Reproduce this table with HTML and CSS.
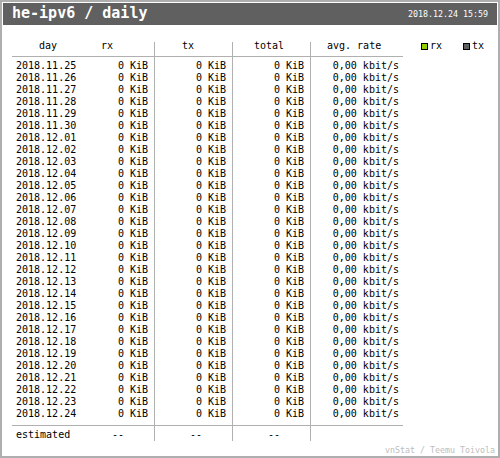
FILE: index.html
```
<!DOCTYPE html>
<html>
<head>
<meta charset="utf-8">
<link rel="stylesheet" href="styles.css">
</head>
<body>
<div class="frame">
  <div class="titlebar">
    <div class="title">he-ipv6 / daily</div>
    <div class="date">2018.12.24 15:59</div>
  </div>
  <div class="main">
    <div class="table">
      <div class="col day">
        <div class="hd">day</div>
        <div class="bd">
          <div>2018.11.25</div><div>2018.11.26</div><div>2018.11.27</div><div>2018.11.28</div><div>2018.11.29</div><div>2018.11.30</div>
          <div>2018.12.01</div><div>2018.12.02</div><div>2018.12.03</div><div>2018.12.04</div><div>2018.12.05</div><div>2018.12.06</div>
          <div>2018.12.07</div><div>2018.12.08</div><div>2018.12.09</div><div>2018.12.10</div><div>2018.12.11</div><div>2018.12.12</div>
          <div>2018.12.13</div><div>2018.12.14</div><div>2018.12.15</div><div>2018.12.16</div><div>2018.12.17</div><div>2018.12.18</div>
          <div>2018.12.19</div><div>2018.12.20</div><div>2018.12.21</div><div>2018.12.22</div><div>2018.12.23</div><div>2018.12.24</div>
        </div>
        <div class="est">estimated</div>
      </div>
      <div class="col rx">
        <div class="hd">rx</div>
        <div class="bd">
          <div>0 KiB</div><div>0 KiB</div><div>0 KiB</div><div>0 KiB</div><div>0 KiB</div><div>0 KiB</div>
          <div>0 KiB</div><div>0 KiB</div><div>0 KiB</div><div>0 KiB</div><div>0 KiB</div><div>0 KiB</div>
          <div>0 KiB</div><div>0 KiB</div><div>0 KiB</div><div>0 KiB</div><div>0 KiB</div><div>0 KiB</div>
          <div>0 KiB</div><div>0 KiB</div><div>0 KiB</div><div>0 KiB</div><div>0 KiB</div><div>0 KiB</div>
          <div>0 KiB</div><div>0 KiB</div><div>0 KiB</div><div>0 KiB</div><div>0 KiB</div><div>0 KiB</div>
        </div>
        <div class="est">--</div>
      </div>
      <div class="col tx sep">
        <div class="hd">tx</div>
        <div class="bd">
          <div>0 KiB</div><div>0 KiB</div><div>0 KiB</div><div>0 KiB</div><div>0 KiB</div><div>0 KiB</div>
          <div>0 KiB</div><div>0 KiB</div><div>0 KiB</div><div>0 KiB</div><div>0 KiB</div><div>0 KiB</div>
          <div>0 KiB</div><div>0 KiB</div><div>0 KiB</div><div>0 KiB</div><div>0 KiB</div><div>0 KiB</div>
          <div>0 KiB</div><div>0 KiB</div><div>0 KiB</div><div>0 KiB</div><div>0 KiB</div><div>0 KiB</div>
          <div>0 KiB</div><div>0 KiB</div><div>0 KiB</div><div>0 KiB</div><div>0 KiB</div><div>0 KiB</div>
        </div>
        <div class="est">--</div>
      </div>
      <div class="col total sep">
        <div class="hd">total</div>
        <div class="bd">
          <div>0 KiB</div><div>0 KiB</div><div>0 KiB</div><div>0 KiB</div><div>0 KiB</div><div>0 KiB</div>
          <div>0 KiB</div><div>0 KiB</div><div>0 KiB</div><div>0 KiB</div><div>0 KiB</div><div>0 KiB</div>
          <div>0 KiB</div><div>0 KiB</div><div>0 KiB</div><div>0 KiB</div><div>0 KiB</div><div>0 KiB</div>
          <div>0 KiB</div><div>0 KiB</div><div>0 KiB</div><div>0 KiB</div><div>0 KiB</div><div>0 KiB</div>
          <div>0 KiB</div><div>0 KiB</div><div>0 KiB</div><div>0 KiB</div><div>0 KiB</div><div>0 KiB</div>
        </div>
        <div class="est">--</div>
      </div>
      <div class="col rate sep">
        <div class="hd">avg. rate</div>
        <div class="bd">
          <div>0,00 kbit/s</div><div>0,00 kbit/s</div><div>0,00 kbit/s</div><div>0,00 kbit/s</div><div>0,00 kbit/s</div><div>0,00 kbit/s</div>
          <div>0,00 kbit/s</div><div>0,00 kbit/s</div><div>0,00 kbit/s</div><div>0,00 kbit/s</div><div>0,00 kbit/s</div><div>0,00 kbit/s</div>
          <div>0,00 kbit/s</div><div>0,00 kbit/s</div><div>0,00 kbit/s</div><div>0,00 kbit/s</div><div>0,00 kbit/s</div><div>0,00 kbit/s</div>
          <div>0,00 kbit/s</div><div>0,00 kbit/s</div><div>0,00 kbit/s</div><div>0,00 kbit/s</div><div>0,00 kbit/s</div><div>0,00 kbit/s</div>
          <div>0,00 kbit/s</div><div>0,00 kbit/s</div><div>0,00 kbit/s</div><div>0,00 kbit/s</div><div>0,00 kbit/s</div><div>0,00 kbit/s</div>
        </div>
        <div class="est"></div>
      </div>
    </div>
    <div class="legend">
      <div class="lg-item">
        <span class="sq sq-rx"></span><span class="lg-text">rx</span>
      </div>
      <div class="lg-item lg-second">
        <span class="sq sq-tx"></span><span class="lg-text">tx</span>
      </div>
    </div>
  </div>
  <div class="footer">vnStat / Teemu Toivola</div>
</div>
</body>
</html>
```

FILE: styles.css
```
html, body {
  margin: 0;
  padding: 0;
  background: #fff;
}

.frame {
  width: 500px;
  height: 458px;
  box-sizing: border-box;
  border: 2px solid #aeaeae;
  padding: 1px;
  display: flex;
  flex-direction: column;
  font-family: "DejaVu Sans Mono", monospace;
  color: #000;
}

.titlebar {
  flex: none;
  height: 22px;
  background: #606060;
  color: #fff;
  display: flex;
  justify-content: space-between;
  align-items: flex-start;
}

.title {
  font-weight: bold;
  font-size: 15px;
  line-height: 20px;
  padding-left: 9px;
  white-space: pre;
}

.date {
  font-size: 8.3px;
  line-height: 10px;
  margin-top: 6px;
  padding-right: 9px;
  white-space: pre;
}

.main {
  flex: none;
  display: flex;
  align-items: flex-start;
  margin-top: 17px;
  padding-left: 9px;
}

.table {
  display: flex;
}

.col {
  display: flex;
  flex-direction: column;
  box-sizing: border-box;
}

.col.sep {
  border-left: 1px solid #b0b0b0;
}

.day { width: 68px; }
.rx { width: 74px; }
.tx, .total { width: 78px; }
.rate { width: 93px; }

.hd {
  height: 14px;
  border-bottom: 1px solid #b0b0b0;
  font-size: 10px;
  line-height: 8px;
  white-space: pre;
}

.day .hd { padding-left: 27px; }
.rx .hd { padding-left: 21px; }
.tx .hd { padding-left: 27px; }
.total .hd { padding-left: 21px; }
.rate .hd { padding-left: 16px; }

.bd {
  padding: 3px 6px 5px 0;
  border-bottom: 1px solid #b0b0b0;
  font-size: 10px;
  line-height: 12px;
  text-align: right;
}

.bd > div {
  height: 12px;
  white-space: nowrap;
}

.day .bd {
  text-align: left;
  padding-left: 4px;
  padding-right: 0;
}

.rate .bd { padding-right: 4px; }

.est {
  height: 15px;
  box-sizing: border-box;
  padding: 3px 30px 0 0;
  font-size: 10px;
  line-height: 12px;
  text-align: right;
  white-space: pre;
}

.day .est {
  text-align: left;
  padding-left: 4px;
  padding-right: 0;
}

.legend {
  display: flex;
  align-items: flex-start;
  margin-left: 18px;
}

.lg-item {
  display: flex;
  align-items: flex-start;
}

.lg-second {
  margin-left: 21px;
}

.sq {
  display: block;
  width: 7px;
  height: 7px;
  box-sizing: border-box;
  border: 1px solid #000;
  margin-top: 1px;
}

.sq-rx { background: #92cf00; }
.sq-tx { background: #606060; }

.lg-text {
  font-size: 10px;
  line-height: 8px;
  margin-left: 2px;
}

.footer {
  margin-top: auto;
  text-align: right;
  font-size: 8.3px;
  line-height: 10px;
  color: #bdbdbd;
  padding-right: 2px;
  white-space: pre;
}
```
